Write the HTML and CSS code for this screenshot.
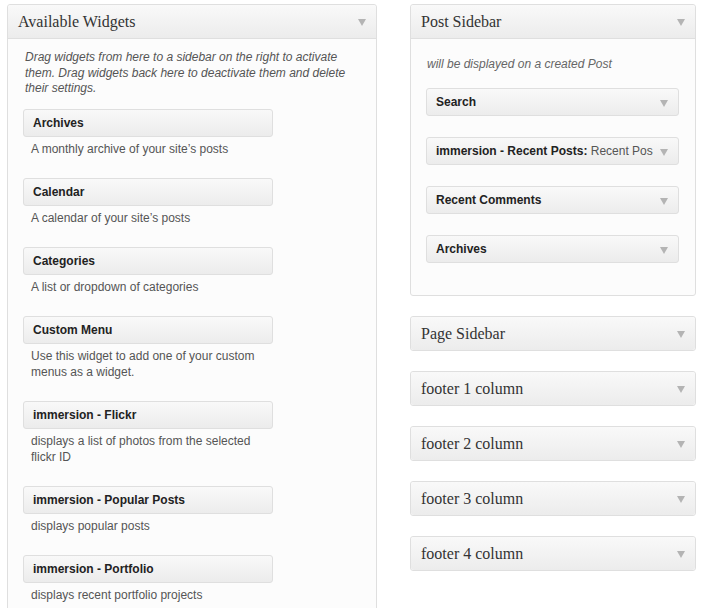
FILE: index.html
```html
<!DOCTYPE html>
<html>
<head>
<meta charset="utf-8">
<link rel="stylesheet" href="styles.css">
</head>
<body>
<div class="page">
  <div class="col-left">
    <div class="panel">
      <div class="panel-head"><span class="panel-title">Available Widgets</span><span class="arrow"></span></div>
      <div class="panel-body">
        <p class="intro">Drag widgets from here to a sidebar on the right to activate them. Drag widgets back here to deactivate them and delete their settings.</p>
        <ul class="widget-list">
          <li class="widget-item"><div class="wbox"><span class="wtitle">Archives</span></div><p class="wdesc">A monthly archive of your site’s posts</p></li>
          <li class="widget-item"><div class="wbox"><span class="wtitle">Calendar</span></div><p class="wdesc">A calendar of your site’s posts</p></li>
          <li class="widget-item"><div class="wbox"><span class="wtitle">Categories</span></div><p class="wdesc">A list or dropdown of categories</p></li>
          <li class="widget-item"><div class="wbox"><span class="wtitle">Custom Menu</span></div><p class="wdesc">Use this widget to add one of your custom menus as a widget.</p></li>
          <li class="widget-item"><div class="wbox"><span class="wtitle">immersion - Flickr</span></div><p class="wdesc">displays a list of photos from the selected flickr ID</p></li>
          <li class="widget-item"><div class="wbox"><span class="wtitle">immersion - Popular Posts</span></div><p class="wdesc">displays popular posts</p></li>
          <li class="widget-item"><div class="wbox"><span class="wtitle">immersion - Portfolio</span></div><p class="wdesc">displays recent portfolio projects</p></li>
        </ul>
      </div>
    </div>
  </div>
  <div class="col-right">
    <div class="panel">
      <div class="panel-head"><span class="panel-title">Post Sidebar</span><span class="arrow"></span></div>
      <div class="panel-body sidebar-body">
        <p class="sidebar-desc">will be displayed on a created Post</p>
        <div class="sbox"><span class="wtitle">Search</span><span class="arrow small"></span></div>
        <div class="sbox"><span class="wtitle">immersion - Recent Posts:<span class="in-title"> Recent Pos</span></span><span class="arrow small"></span></div>
        <div class="sbox"><span class="wtitle">Recent Comments</span><span class="arrow small"></span></div>
        <div class="sbox"><span class="wtitle">Archives</span><span class="arrow small"></span></div>
      </div>
    </div>
    <div class="panel closed"><div class="panel-head"><span class="panel-title">Page Sidebar</span><span class="arrow"></span></div></div>
    <div class="panel closed"><div class="panel-head"><span class="panel-title">footer 1 column</span><span class="arrow"></span></div></div>
    <div class="panel closed"><div class="panel-head"><span class="panel-title">footer 2 column</span><span class="arrow"></span></div></div>
    <div class="panel closed"><div class="panel-head"><span class="panel-title">footer 3 column</span><span class="arrow"></span></div></div>
    <div class="panel closed"><div class="panel-head"><span class="panel-title">footer 4 column</span><span class="arrow"></span></div></div>
  </div>
</div>
</body>
</html>
```
FILE: styles.css
```css
* { box-sizing: border-box; }
html, body { margin: 0; padding: 0; background: #fff; }
body {
  font-family: "Liberation Sans", Arial, sans-serif;
  font-size: 12px;
  color: #333;
  overflow: hidden;
  height: 608px;
}
.page {
  display: flex;
  align-items: flex-start;
  gap: 33px;
  padding: 4px 0 0 7px;
}
.col-left { width: 370px; flex: none; }
.col-right {
  width: 286px;
  flex: none;
  display: flex;
  flex-direction: column;
  gap: 20px;
}
.panel {
  background: #fcfcfc;
  border: 1px solid #dfdfdf;
  border-radius: 3px;
}
.col-left .panel { min-height: 700px; }
.panel-head {
  height: 34px;
  display: flex;
  align-items: center;
  justify-content: space-between;
  padding: 0 10px 0 10px;
  background: linear-gradient(#f9f9f9, #ececec);
  border-bottom: 1px solid #dfdfdf;
  border-radius: 3px 3px 0 0;
}
.panel.closed .panel-head { border-bottom: 0; border-radius: 3px; height: 33px; }
.panel-title {
  font-family: "Liberation Serif", "Times New Roman", serif;
  font-size: 16px;
  color: #333;
}
.arrow {
  width: 0; height: 0;
  border-left: 4px solid transparent;
  border-right: 4px solid transparent;
  border-top: 7px solid #b4b4b4;
  margin-top: 2px;
}
.panel-body { padding: 11px 15px 0 15px; }
.intro {
  margin: 0 0 12px 2px;
  font-style: italic;
  font-size: 12px;
  line-height: 15.5px;
  color: #555;
}
.widget-list {
  list-style: none;
  margin: 0;
  padding: 0;
  display: flex;
  flex-direction: column;
  gap: 21px;
}
.wbox {
  width: 250px;
  height: 28px;
  display: flex;
  align-items: center;
  padding: 0 9px;
  background: linear-gradient(#f9f9f9, #ececec);
  border: 1px solid #dfdfdf;
  border-radius: 3px;
}
.wtitle {
  font-weight: bold;
  font-size: 12px;
  color: #222;
  white-space: nowrap;
}
.wdesc {
  margin: 4px 0 0 8px;
  width: 240px;
  font-size: 12px;
  line-height: 16px;
  color: #555;
}
.sidebar-body {
  padding: 0 16px 32px 15px;
  display: flex;
  flex-direction: column;
  gap: 21px;
}
.sidebar-desc {
  margin: 17px 0 -5px 1px;
  font-style: italic;
  font-size: 12px;
  line-height: 16px;
  color: #666;
}
.sbox {
  height: 28px;
  display: flex;
  align-items: center;
  justify-content: space-between;
  padding: 0 10px 0 9px;
  background: linear-gradient(#f9f9f9, #ececec);
  border: 1px solid #dfdfdf;
  border-radius: 3px;
  gap: 6px;
}
.in-title { font-weight: normal; color: #555; }
.arrow.small { flex: none; }
```
